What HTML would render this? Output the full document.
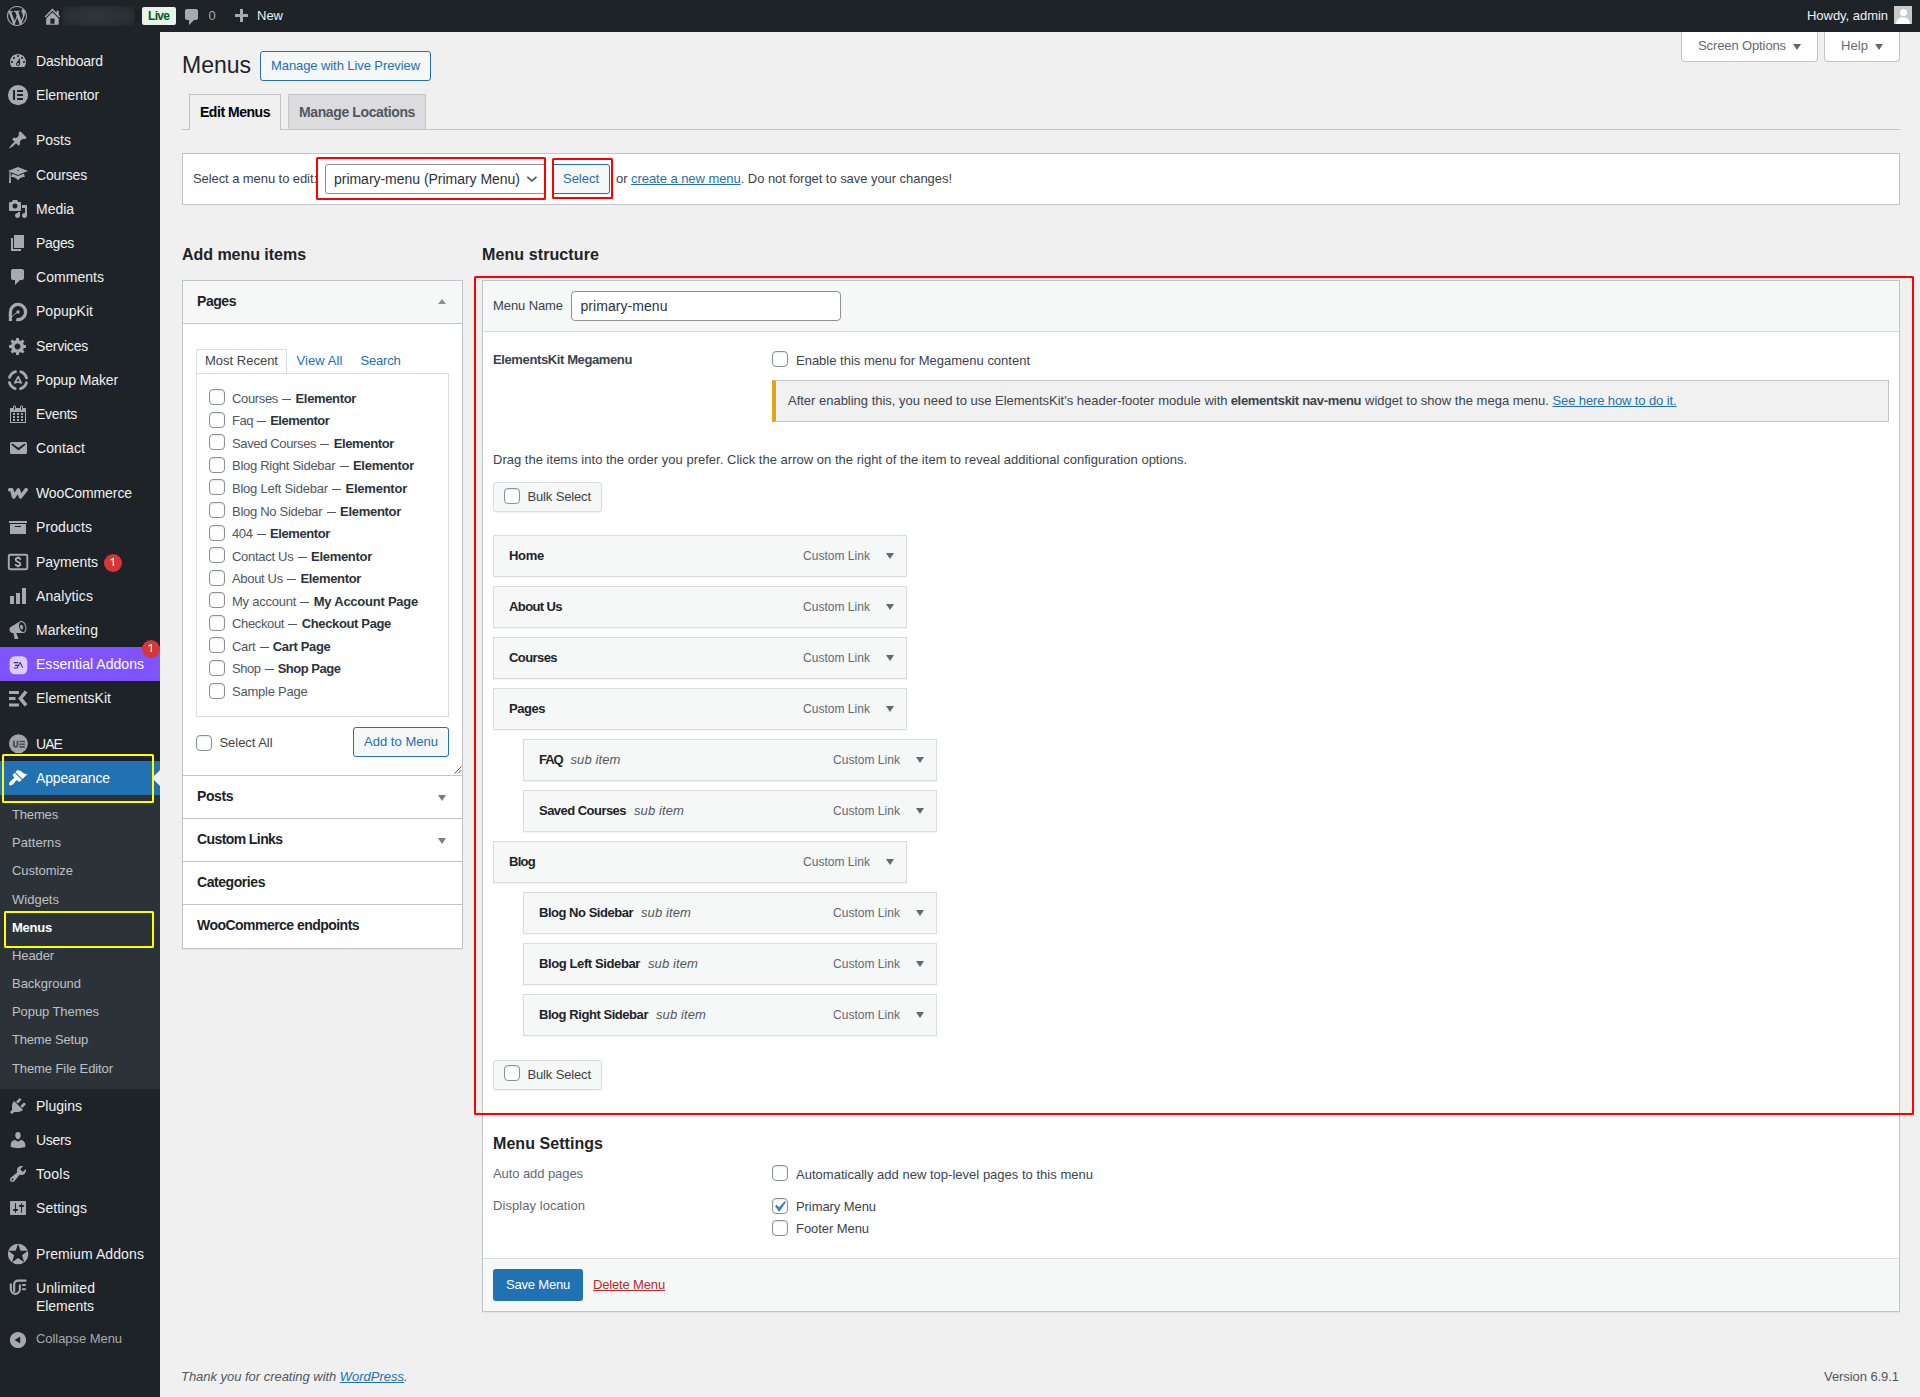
<!DOCTYPE html>
<html lang="en">
<head>
<meta charset="utf-8">
<title>Menus</title>
<style>
*{box-sizing:border-box;margin:0;padding:0}
html,body{width:1920px;height:1397px;overflow:hidden}
body{font-family:"Liberation Sans",sans-serif;font-size:13px;line-height:20px;color:#3c434a;background:#f0f0f1;position:relative}
.abs{position:absolute}
.tx{position:absolute;white-space:nowrap}
.box{position:absolute;background:#fff;border:1px solid #c3c4c7}
.cb{position:absolute;width:16px;height:16px;border:1px solid #8c8f94;border-radius:4px;background:#fff;box-shadow:inset 0 1px 2px rgba(0,0,0,.1)}
.btn2{position:absolute;border:1px solid #2271b1;border-radius:3px;background:#f6f7f7}
.item{position:absolute;height:42px;width:414px;background:#f6f7f7;border:1px solid #dcdcde;box-shadow:0 1px 1px rgba(0,0,0,.04)}
.red{position:absolute;border:2px solid #f00;border-radius:1.5px}
.yel{position:absolute;border:2px solid #ff0;border-radius:1.5px}
a{color:#2271b1}
.dash{display:inline-block;width:9px;height:1px;background:#50575e;vertical-align:3px;margin:0 1px}

</style>
</head>
<body>
<div class="abs" style="left:0;top:0;width:1920px;height:32px;background:#1d2327"></div>
<svg class="abs" style="left:7px;top:6px;" width="20" height="20" viewBox="0 0 20 20"><path fill="#a7aaad" d="M20 10c0-5.51-4.49-10-10-10C4.48 0 0 4.49 0 10c0 5.52 4.48 10 10 10 5.51 0 10-4.48 10-10zM7.78 15.37L4.37 6.22c.55-.02 1.17-.08 1.17-.08.5-.06.44-1.13-.06-1.11 0 0-1.45.11-2.37.11-.18 0-.37 0-.58-.01C4.12 2.69 6.87 1.11 10 1.11c2.33 0 4.45.87 6.05 2.34-.68-.11-1.65.39-1.65 1.58 0 .74.45 1.36.9 2.1.35.61.55 1.36.55 2.46 0 1.49-1.4 5-1.4 5l-3.03-8.37c.54-.02.82-.17.82-.17.5-.05.44-1.25-.06-1.22 0 0-1.44.12-2.38.12-.87 0-2.33-.12-2.33-.12-.5-.03-.56 1.2-.06 1.22l.92.08 1.26 3.41zM17.41 10c.24-.64.74-1.87.43-4.25.7 1.29 1.05 2.71 1.05 4.25 0 3.29-1.73 6.24-4.4 7.78.97-2.59 1.94-5.2 2.92-7.78zM6.1 18.09C3.12 16.65 1.11 13.53 1.11 10c0-1.3.23-2.48.72-3.59C3.25 10.3 4.67 14.2 6.1 18.09zm4.03-6.63l2.58 6.98c-.86.29-1.76.45-2.71.45-.79 0-1.57-.11-2.29-.33.81-2.38 1.62-4.74 2.42-7.1z"/></svg>
<svg class="abs" style="left:41.5px;top:5.7px;" width="20.9" height="20.9" viewBox="0 0 20 20"><path fill="#a7aaad" d="M16 8.5l1.53 1.53-1.06 1.06L10 4.62l-6.47 6.47-1.06-1.06L10 2.5l4 4v-2h2v4zm-6-2.46l6 5.99V18H4v-5.97zM12 17v-5H8v5h4z"/></svg>
<div class="abs" style="left:63px;top:6px;width:71px;height:20px;background:radial-gradient(ellipse at center,#30353a 0%,#2b3035 55%,#23282c 100%)"></div>
<div class="abs" style="left:142px;top:7px;width:34px;height:18px;background:#e9f4eb;border-radius:2px"></div>
<div class="tx " id="t1" style="top:6.34px;font-size:12px;line-height:20px;color:#005c12;left:148px;font-weight:700;letter-spacing:-0.679px;">Live</div>
<svg class="abs" style="left:182px;top:7px;" width="20" height="20" viewBox="0 0 20 20"><path fill="#a7aaad" d="M5 2h9c1.1 0 2 .9 2 2v7c0 1.1-.9 2-2 2h-2l-5 5v-5H5c-1.1 0-2-.9-2-2V4c0-1.1.9-2 2-2z"/></svg>
<div class="tx " id="t2" style="top:6.00px;font-size:13px;line-height:20px;color:#a7aaad;left:208.5px;">0</div>
<svg class="abs" style="left:230.7px;top:7.4px;" width="20" height="20" viewBox="0 0 20 20"><path fill="#a7aaad" d="M17 7v3h-5v5H9v-5H4V7h5V2h3v5h5z"/></svg>
<div class="tx " id="t3" style="top:6.00px;font-size:13px;line-height:20px;color:#f0f0f1;left:257px;letter-spacing:-0.005px;">New</div>
<div class="tx " id="t4" style="top:6.00px;font-size:13px;line-height:20px;color:#f0f0f1;right:32px;letter-spacing:-0.034px;">Howdy, admin</div>
<div class="abs" style="left:1894px;top:6px;width:18px;height:18px;background:#c8c8c8;overflow:hidden"><div class="abs" style="left:5.5px;top:3px;width:7px;height:7px;border-radius:50%;background:#fff"></div><div class="abs" style="left:2px;top:10.5px;width:14px;height:12px;border-radius:7px 7px 0 0;background:#fff"></div></div>
<div class="abs" style="left:0;top:32px;width:160px;height:1365px;background:#1d2327"></div>
<div class="abs" style="left:0;top:647px;width:160px;height:34px;background:#7f54ff"></div>
<div class="abs" style="left:0;top:761px;width:160px;height:34px;background:#2271b1"></div>
<div class="abs" style="left:0;top:795px;width:160px;height:294px;background:#2c3338"></div>
<div class="abs" style="left:144px;top:770px;width:0;height:0;border:8px solid transparent;border-right-color:#f0f0f1"></div>
<svg class="abs" style="left:8px;top:51px;" width="20" height="20" viewBox="0 0 20 20"><path fill="#a7aaad" d="M3.76 16h12.48c1.1-1.37 1.76-3.11 1.76-5 0-4.42-3.58-8-8-8s-8 3.58-8 8c0 1.89.66 3.63 1.76 5zM10 4c.55 0 1 .45 1 1s-.45 1-1 1-1-.45-1-1 .45-1 1-1zM6 6c.55 0 1 .45 1 1s-.45 1-1 1-1-.45-1-1 .45-1 1-1zm8 0c.55 0 1 .45 1 1s-.45 1-1 1-1-.45-1-1 .45-1 1-1zm-5.37 5.55L12 7v6c0 1.1-.9 2-2 2s-2-.9-2-2c0-.57.24-1.08.63-1.45zM4 10c.55 0 1 .45 1 1s-.45 1-1 1-1-.45-1-1 .45-1 1-1zm12 0c.55 0 1 .45 1 1s-.45 1-1 1-1-.45-1-1 .45-1 1-1zm-5 3c0-.55-.45-1-1-1s-1 .45-1 1 .45 1 1 1 1-.45 1-1z"/></svg>
<div class="tx " id="t5" style="top:51.00px;font-size:14px;line-height:20px;color:#f0f0f1;left:36px;letter-spacing:-0.167px;">Dashboard</div>
<svg class="abs" style="left:8px;top:85px;overflow:visible" width="20" height="20" viewBox="0 0 20 20"><circle cx="10.05" cy="10.1" r="10.1" fill="#a7aaad"/><path fill="#1d2327" d="M5.05 5.1h1.95v9.8H5.05zM9.15 5.1h5.85v1.95H9.15zM9.15 9.03h5.85v1.95H9.15zM9.15 12.95h5.85v1.95H9.15z"/></svg>
<div class="tx " id="t6" style="top:85.20px;font-size:14px;line-height:20px;color:#f0f0f1;left:36px;letter-spacing:-0.090px;">Elementor</div>
<svg class="abs" style="left:8px;top:130px;" width="20" height="20" viewBox="0 0 20 20"><path fill="#a7aaad" d="M10.44 3.02l1.82-1.82 6.36 6.35-1.83 1.82c-1.05-.68-2.48-.57-3.41.36l-.75.75c-.92.93-1.04 2.35-.35 3.41l-1.83 1.82-2.41-2.41-2.8 2.79c-.42.42-3.38 2.71-3.8 2.29s1.86-3.39 2.28-3.81l2.79-2.79L4.1 9.36l1.83-1.82c1.05.69 2.48.57 3.4-.36l.75-.75c.93-.92 1.05-2.35.36-3.41z"/></svg>
<div class="tx " id="t7" style="top:130.40px;font-size:14px;line-height:20px;color:#f0f0f1;left:36px;letter-spacing:-0.003px;">Posts</div>
<svg class="abs" style="left:8px;top:165px;" width="20" height="20" viewBox="0 0 20 20"><path fill="#a7aaad" d="M10 10L2.54 7.02 3 18H1l.48-11.41L0 6l10-4 10 4zm0-5c-.55 0-1 .22-1 .5s.45.5 1 .5 1-.22 1-.5-.45-.5-1-.5zm0 6l5.57-2.23c.71.94 1.2 2.07 1.36 3.3-.3-.04-.61-.07-.93-.07-2.55 0-4.78 1.37-6 3.41C8.78 13.37 6.55 12 4 12c-.32 0-.63.03-.93.07.16-1.23.65-2.36 1.36-3.3z"/></svg>
<div class="tx " id="t8" style="top:164.60px;font-size:14px;line-height:20px;color:#f0f0f1;left:36px;letter-spacing:-0.163px;">Courses</div>
<svg class="abs" style="left:8px;top:199px;" width="20" height="20" viewBox="0 0 20 20"><path fill="#a7aaad" d="M13 11V4c0-.55-.45-1-1-1h-1.67L9 1H5L3.67 3H2c-.55 0-1 .45-1 1v7c0 .55.45 1 1 1h10c.55 0 1-.45 1-1zM7 4.5c1.38 0 2.5 1.12 2.5 2.5S8.38 9.5 7 9.5 4.5 8.38 4.5 7 5.62 4.5 7 4.5zM14 6h5v10.5c0 1.38-1.12 2.5-2.5 2.5S14 17.88 14 16.5s1.12-2.5 2.5-2.5c.17 0 .34.02.5.05V9h-3V6zm-4 8.05V13h2v3.5c0 1.38-1.12 2.5-2.5 2.5S7 17.88 7 16.5 8.12 14 9.5 14c.17 0 .34.02.5.05z"/></svg>
<div class="tx " id="t9" style="top:198.80px;font-size:14px;line-height:20px;color:#f0f0f1;left:36px;letter-spacing:-0.028px;">Media</div>
<svg class="abs" style="left:8px;top:233px;" width="20" height="20" viewBox="0 0 20 20"><path fill="#a7aaad" d="M6 15V2h10v13H6zm-1 1h8v2H3V5h2v11z"/></svg>
<div class="tx " id="t10" style="top:233.00px;font-size:14px;line-height:20px;color:#f0f0f1;left:36px;letter-spacing:-0.341px;">Pages</div>
<svg class="abs" style="left:8px;top:267px;" width="20" height="20" viewBox="0 0 20 20"><path fill="#a7aaad" d="M5 2h9c1.1 0 2 .9 2 2v7c0 1.1-.9 2-2 2h-2l-5 5v-5H5c-1.1 0-2-.9-2-2V4c0-1.1.9-2 2-2z"/></svg>
<div class="tx " id="t11" style="top:267.20px;font-size:14px;line-height:20px;color:#f0f0f1;left:36px;letter-spacing:0.039px;">Comments</div>
<svg class="abs" style="left:8px;top:301px;overflow:visible" width="20" height="20" viewBox="0 0 20 20"><path fill="none" stroke="#a7aaad" stroke-width="3.2" d="M2.4 20.1V11.05A7.6 7.6 0 1 1 8.3 18.45"/><path fill="none" stroke="#a7aaad" stroke-width=".9" d="M9.6 11.4Q6 12.6 4.2 15.8"/><circle cx="10" cy="11.05" r="1.7" fill="#a7aaad"/></svg>
<div class="tx " id="t12" style="top:301.40px;font-size:14px;line-height:20px;color:#f0f0f1;left:36px;letter-spacing:0.021px;">PopupKit</div>
<svg class="abs" style="left:8px;top:336px;" width="20" height="20" viewBox="0 0 20 20"><path fill="#a7aaad" d="M18 12h-2.18c-.17.7-.44 1.35-.81 1.93l1.54 1.54-2.1 2.1-1.54-1.54c-.58.36-1.23.63-1.91.79V19H8v-2.18c-.68-.16-1.33-.43-1.91-.79l-1.54 1.54-2.12-2.12 1.54-1.54c-.36-.58-.63-1.23-.79-1.91H1V9.03h2.17c.16-.7.44-1.35.8-1.94L2.43 5.55l2.1-2.1 1.54 1.54c.58-.37 1.24-.64 1.93-.81V2h3v2.18c.68.16 1.33.43 1.91.79l1.54-1.54 2.12 2.12-1.54 1.54c.36.59.64 1.24.8 1.94H18V12zm-8.5 1.5c1.66 0 3-1.34 3-3s-1.34-3-3-3-3 1.34-3 3 1.34 3 3 3z"/></svg>
<div class="tx " id="t13" style="top:335.60px;font-size:14px;line-height:20px;color:#f0f0f1;left:36px;letter-spacing:-0.211px;">Services</div>
<svg class="abs" style="left:8px;top:370px;overflow:visible" width="20" height="20" viewBox="0 0 20 20"><circle cx="9.95" cy="10.15" r="8.85" fill="none" stroke="#a7aaad" stroke-width="2.9" stroke-linecap="round" stroke-dasharray="8.4 5.500" stroke-dashoffset="-2.75"/><path fill="none" stroke="#a7aaad" stroke-width="1.7" stroke-linejoin="round" d="M10.2 6.600L13.200 12.900 10 12 6.700 12.900z"/></svg>
<div class="tx " id="t14" style="top:369.80px;font-size:14px;line-height:20px;color:#f0f0f1;left:36px;letter-spacing:-0.116px;">Popup Maker</div>
<svg class="abs" style="left:8px;top:404px;" width="20" height="20" viewBox="0 0 20 20"><path fill="#a7aaad" d="M15 4h3v15H2V4h3V3c0-.41.15-.76.44-1.06.29-.29.65-.44 1.06-.44s.77.15 1.06.44c.29.3.44.65.44 1.06v1h4V3c0-.41.15-.76.44-1.06.29-.29.65-.44 1.06-.44s.77.15 1.06.44c.29.3.44.65.44 1.06v1zM6 3v2.5c0 .14.05.26.15.36.09.09.21.14.35.14s.26-.05.35-.14c.1-.1.15-.22.15-.36V3c0-.14-.05-.26-.15-.35-.09-.1-.21-.15-.35-.15s-.26.05-.35.15c-.1.09-.15.21-.15.35zm7 0v2.5c0 .14.05.26.14.36.1.09.22.14.36.14s.26-.05.36-.14c.09-.1.14-.22.14-.36V3c0-.14-.05-.26-.14-.35-.1-.1-.22-.15-.36-.15s-.26.05-.36.15c-.09.09-.14.21-.14.35zm4 15V8H3v10h14zM7 9v2H5V9h2zm2 0h2v2H9V9zm4 2V9h2v2h-2zm-6 1v2H5v-2h2zm2 0h2v2H9v-2zm4 2v-2h2v2h-2zm-6 1v2H5v-2h2zm4 2H9v-2h2v2zm4 0h-2v-2h2v2z"/></svg>
<div class="tx " id="t15" style="top:404.00px;font-size:14px;line-height:20px;color:#f0f0f1;left:36px;letter-spacing:-0.302px;">Events</div>
<svg class="abs" style="left:8px;top:438px;" width="20" height="20" viewBox="0 0 20 20"><path fill="#a7aaad" d="M3.87 4h13.25C18.37 4 19 4.59 19 5.79v8.42c0 1.19-.63 1.79-1.88 1.79H3.87c-1.25 0-1.88-.6-1.88-1.79V5.79c0-1.2.63-1.79 1.88-1.79zm6.62 8.6l6.74-5.53c.24-.2.43-.66.13-1.07-.29-.41-.82-.42-1.17-.17l-5.7 3.86L4.8 5.83c-.35-.25-.88-.24-1.17.17-.3.41-.11.87.13 1.07z"/></svg>
<div class="tx " id="t16" style="top:438.20px;font-size:14px;line-height:20px;color:#f0f0f1;left:36px;letter-spacing:0.107px;">Contact</div>
<svg class="abs" style="left:8px;top:483px;overflow:visible" width="20" height="20" viewBox="0 0 20 20"><path fill="none" stroke="#a7aaad" stroke-width="3.6" stroke-linecap="round" stroke-linejoin="round" d="M1.7 6.800H3.700L5.700 14 10.400 6.900 12.500 14 18.200 6.600"/></svg>
<div class="tx " id="t17" style="top:483.40px;font-size:14px;line-height:20px;color:#f0f0f1;left:36px;letter-spacing:-0.091px;">WooCommerce</div>
<svg class="abs" style="left:8px;top:517px;" width="20" height="20" viewBox="0 0 20 20"><path fill="#a7aaad" d="M19 4v2H1V4h18zM2 7h16v10H2V7zm11 3V9H7v1h6z"/></svg>
<div class="tx " id="t18" style="top:516.90px;font-size:14px;line-height:20px;color:#f0f0f1;left:36px;letter-spacing:0.094px;">Products</div>
<svg class="abs" style="left:8px;top:552px;overflow:visible" width="20" height="20" viewBox="0 0 20 20"><rect x=".8" y="2.8" width="18.5" height="14.5" rx="1.2" fill="none" stroke="#a7aaad" stroke-width="1.9"/><path fill="none" stroke="#b4b7ba" stroke-width="1.75" d="M12.35 7.800C12.350 6.500 11.350 5.950 10 5.950C8.600 5.950 7.650 6.650 7.650 7.750C7.650 9.050 8.800 9.450 10 9.850C11.300 10.250 12.400 10.750 12.400 12.100C12.400 13.300 11.400 13.950 10 13.950C8.500 13.950 7.600 13.250 7.600 11.950M10 4.600V6.200M10 13.700V15.300"/></svg>
<div class="tx " id="t19" style="top:551.80px;font-size:14px;line-height:20px;color:#f0f0f1;left:36px;letter-spacing:-0.031px;">Payments</div>
<svg class="abs" style="left:8px;top:586px;" width="20" height="20" viewBox="0 0 20 20"><path fill="#a7aaad" d="M18 18V2h-4v16h4zm-6 0V7H8v11h4zm-6 0v-8H2v8h4z"/></svg>
<div class="tx " id="t20" style="top:585.70px;font-size:14px;line-height:20px;color:#f0f0f1;left:36px;letter-spacing:0.108px;">Analytics</div>
<svg class="abs" style="left:8px;top:620px;" width="20" height="20" viewBox="0 0 20 20"><path fill="#a7aaad" d="M18.15 5.94c.46 1.62.38 3.22-.02 4.48-.42 1.28-1.26 2.18-2.3 2.48-.16.06-.26.06-.4.06-.06.02-.12.02-.18.02-.06.02-.14.02-.22.02h-6.8l2.22 5.5c.02.14-.06.26-.14.34-.08.1-.24.16-.34.16H6.95c-.1 0-.26-.06-.34-.16-.08-.08-.16-.2-.14-.34l-1-5.5H4.25l-.02-.02c-.5.06-1.08-.18-1.54-.62s-.88-1.08-1.06-1.88c-.24-.8-.2-1.56-.02-2.2.18-.62.58-1.08 1.06-1.3l.02-.02 9-5.4c.1-.06.18-.1.24-.16.06-.04.14-.08.24-.12.16-.08.28-.12.5-.18 1.04-.3 2.24.1 3.22.98s1.84 2.24 2.26 3.86zm-2.58 5.98h-.02c.4-.1.74-.34 1.04-.7.58-.7.86-1.76.86-3.04 0-.64-.1-1.3-.28-1.98-.34-1.36-1.02-2.5-1.78-3.24s-1.68-1.1-2.46-.88c-.82.22-1.4.96-1.7 2-.32 1.04-.28 2.36.06 3.72.38 1.36 1 2.5 1.8 3.24.78.74 1.62 1.1 2.48.88zm-2.54-7.08c.22-.04.42-.02.62.04.38.16.76.48 1.02 1s.42 1.2.42 1.78c0 .3-.04.56-.12.8-.18.48-.44.84-.86.94-.34.1-.8-.06-1.14-.4s-.64-.86-.78-1.5c-.18-.62-.12-1.24.02-1.72s.48-.84.82-.94z"/></svg>
<div class="tx " id="t21" style="top:620.20px;font-size:14px;line-height:20px;color:#f0f0f1;left:36px;letter-spacing:0.059px;">Marketing</div>
<svg class="abs" style="left:8px;top:654px;overflow:visible" width="20" height="20" viewBox="0 0 20 20"><rect x="1.6" y="2.2" width="17.7" height="18" rx="5.2" fill="#dccdfe"/><path fill="none" stroke="#3d2a8a" stroke-width="1.05" d="M5.7 8.6h4.8M7 11.35h3M5.7 14h3.5L12.2 8.6 14.7 13.8"/></svg>
<div class="tx " id="t22" style="top:654.40px;font-size:14px;line-height:20px;color:#fff;left:36px;letter-spacing:0.037px;">Essential Addons</div>
<svg class="abs" style="left:8px;top:689px;overflow:visible" width="20" height="20" viewBox="0 0 20 20"><path fill="#a7aaad" d="M1 1.9h9.9v3H1zM1 7.9h6.45v3H1zM1 14.4h9.9v3H1z"/><path fill="none" stroke="#a7aaad" stroke-width="3.5" d="M18.100 2.500L12.400 9.400 18.100 16.400"/></svg>
<div class="tx " id="t23" style="top:687.80px;font-size:14px;line-height:20px;color:#f0f0f1;left:36px;letter-spacing:0.027px;">ElementsKit</div>
<svg class="abs" style="left:8px;top:734px;overflow:visible" width="20" height="20" viewBox="0 0 20 20"><circle cx="10.45" cy="9.75" r="9.45" fill="#a0a4a8"/><path fill="none" stroke="#4a4f55" stroke-width="1.9" d="M5.85 6.7v4.2a1.8 1.8 0 0 0 3.6 0V6.7"/><path fill="#4a4f55" d="M11.3 6.7h5.600v1.650h-5.600zM11.3 9.400h5.600v1.650h-5.600zM11.3 12.05h5.600v1.650h-5.600z"/></svg>
<div class="tx " id="t24" style="top:733.80px;font-size:14px;line-height:20px;color:#f0f0f1;left:36px;letter-spacing:-0.932px;">UAE</div>
<svg class="abs" style="left:8px;top:768px;" width="20" height="20" viewBox="0 0 20 20"><path fill="#fff" d="M14.48 11.06L7.41 3.99l1.5-1.5c.5-.56 2.3-.47 3.51.32 1.21.8 1.43 1.28 2.91 2.1 1.18.64 2.45 1.26 4.45.85zm-.71.71L6.7 4.7 4.93 6.47c-.39.39-.39 1.02 0 1.41l1.06 1.06c.39.39.39 1.03 0 1.42-.6.6-1.43 1.11-2.21 1.69-.35.26-.7.53-1.01.84C1.43 14.23.4 16.08 1.4 17.07c.99 1 2.84-.03 4.18-1.36.31-.31.58-.66.85-1.02.57-.78 1.08-1.61 1.69-2.21.39-.39 1.02-.39 1.41 0l1.06 1.06c.39.39 1.02.39 1.41 0z"/></svg>
<div class="tx " id="t25" style="top:768.00px;font-size:14px;line-height:20px;color:#fff;left:36px;letter-spacing:-0.152px;">Appearance</div>
<div class="abs" style="left:104px;top:554px;width:18px;height:18px;border-radius:9px;background:#d63638"><svg class="abs" style="left:0;top:0" width="18" height="18" viewBox="0 0 18 18"><path fill="#fff" d="M10 4V12H8.700V5.650L6.300 6.600V5.450L9.100 4z"/></svg></div>
<div class="abs" style="left:142px;top:640px;width:18px;height:18px;border-radius:9px;background:#d63638"><svg class="abs" style="left:0;top:0" width="18" height="18" viewBox="0 0 18 18"><path fill="#fff" d="M10 4V12H8.700V5.650L6.300 6.600V5.450L9.100 4z"/></svg></div>
<div class="tx " id="t26" style="top:804.50px;font-size:13px;line-height:20px;color:#bdc1c5;left:12px;letter-spacing:-0.161px;">Themes</div>
<div class="tx " id="t27" style="top:832.50px;font-size:13px;line-height:20px;color:#bdc1c5;left:12px;letter-spacing:0.072px;">Patterns</div>
<div class="tx " id="t28" style="top:860.50px;font-size:13px;line-height:20px;color:#bdc1c5;left:12px;letter-spacing:-0.047px;">Customize</div>
<div class="tx " id="t29" style="top:889.95px;font-size:13px;line-height:20px;color:#bdc1c5;left:12px;letter-spacing:0.004px;">Widgets</div>
<div class="tx " id="t30" style="top:918.10px;font-size:13px;line-height:20px;color:#fff;left:12px;font-weight:700;letter-spacing:-0.234px;">Menus</div>
<div class="tx " id="t31" style="top:946.25px;font-size:13px;line-height:20px;color:#bdc1c5;left:12px;letter-spacing:-0.107px;">Header</div>
<div class="tx " id="t32" style="top:974.40px;font-size:13px;line-height:20px;color:#bdc1c5;left:12px;letter-spacing:-0.039px;">Background</div>
<div class="tx " id="t33" style="top:1001.55px;font-size:13px;line-height:20px;color:#bdc1c5;left:12px;letter-spacing:-0.078px;">Popup Themes</div>
<div class="tx " id="t34" style="top:1029.70px;font-size:13px;line-height:20px;color:#bdc1c5;left:12px;letter-spacing:-0.186px;">Theme Setup</div>
<div class="tx " id="t35" style="top:1058.85px;font-size:13px;line-height:20px;color:#bdc1c5;left:12px;letter-spacing:-0.094px;">Theme File Editor</div>
<div class="yel" style="left:2px;top:754px;width:152px;height:49px"></div>
<div class="yel" style="left:4px;top:911px;width:150px;height:37px"></div>
<svg class="abs" style="left:8px;top:1096px;" width="20" height="20" viewBox="0 0 20 20"><path fill="#a7aaad" d="M13.11 4.36L9.87 7.6 8 5.73l3.24-3.24c.35-.34 1.05-.2 1.56.32.52.51.66 1.21.31 1.55zm-8 1.77l.91-1.12 9.01 9.01-1.19.84c-.71.71-2.63 1.16-3.82 1.16H6.14L4.9 17.26c-.59.59-1.54.59-2.12 0-.59-.58-.59-1.53 0-2.12l1.24-1.24v-3.88c0-1.13.4-3.19 1.09-3.89zm7.26 3.97l3.24-3.24c.34-.35 1.04-.21 1.55.31.52.51.66 1.21.31 1.55l-3.24 3.25z"/></svg>
<div class="tx " id="t36" style="top:1095.80px;font-size:14px;line-height:20px;color:#f0f0f1;left:36px;letter-spacing:0.011px;">Plugins</div>
<svg class="abs" style="left:8px;top:1130px;" width="20" height="20" viewBox="0 0 20 20"><path fill="#a7aaad" d="M10 9.25c-2.27 0-2.73-3.44-2.73-3.44C7 4.02 7.82 2 9.97 2c2.16 0 2.98 2.02 2.71 3.81 0 0-.41 3.44-2.68 3.44zm0 2.57L12.72 10c2.39 0 4.52 2.33 4.52 4.53v2.49s-3.65 1.13-7.24 1.13c-3.65 0-7.24-1.13-7.24-1.13v-2.49c0-2.25 1.94-4.48 4.47-4.48z"/></svg>
<div class="tx " id="t37" style="top:1130.00px;font-size:14px;line-height:20px;color:#f0f0f1;left:36px;letter-spacing:-0.312px;">Users</div>
<svg class="abs" style="left:8px;top:1164px;" width="20" height="20" viewBox="0 0 20 20"><path fill="#a7aaad" d="M16.68 9.77c-1.34 1.34-3.3 1.67-4.95.99l-5.41 6.52c-.99.99-2.59.99-3.58 0s-.99-2.59 0-3.57l6.52-5.42c-.68-1.65-.35-3.61.99-4.95 1.28-1.28 3.12-1.62 4.72-1.06l-2.89 2.89 2.82 2.82 2.86-2.87c.53 1.58.18 3.39-1.08 4.65zM3.81 16.21c.4.39 1.04.39 1.43 0 .4-.4.4-1.04 0-1.43-.39-.4-1.03-.4-1.43 0-.39.39-.39 1.03 0 1.43z"/></svg>
<div class="tx " id="t38" style="top:1164.20px;font-size:14px;line-height:20px;color:#f0f0f1;left:36px;letter-spacing:0.263px;">Tools</div>
<svg class="abs" style="left:8px;top:1198px;" width="20" height="20" viewBox="0 0 20 20"><path fill="#a7aaad" d="M18 16V4c0-.55-.45-1-1-1H3c-.55 0-1 .45-1 1v12c0 .55.45 1 1 1h14c.55 0 1-.45 1-1zM8 11h1c.55 0 1 .45 1 1s-.45 1-1 1H8v1.5c0 .28-.22.5-.5.5s-.5-.22-.5-.5V13H6c-.55 0-1-.45-1-1s.45-1 1-1h1V5.5c0-.28.22-.5.5-.5s.5.22.5.5V11zm5-2h-1c-.55 0-1-.45-1-1s.45-1 1-1h1V5.5c0-.28.22-.5.5-.5s.5.22.5.5V7h1c.55 0 1 .45 1 1s-.45 1-1 1h-1v5.5c0 .28-.22.5-.5.5s-.5-.22-.5-.5V9z"/></svg>
<div class="tx " id="t39" style="top:1198.40px;font-size:14px;line-height:20px;color:#f0f0f1;left:36px;letter-spacing:0.051px;">Settings</div>
<svg class="abs" style="left:8px;top:1244px;overflow:visible" width="20" height="20" viewBox="0 0 20 20"><circle cx="10.1" cy="10" r="10.3" fill="#a7aaad"/><path fill="#1d2327" d="M10.10 -0.30L12.51 6.68L19.90 6.82L14.00 11.27L16.15 18.33L10.10 14.10L4.05 18.33L6.20 11.27L0.30 6.82L7.69 6.68z"/></svg>
<div class="tx " id="t40" style="top:1243.60px;font-size:14px;line-height:20px;color:#f0f0f1;left:36px;letter-spacing:0.099px;">Premium Addons</div>
<svg class="abs" style="left:8px;top:1278px;overflow:visible" width="20" height="20" viewBox="0 0 20 20"><g fill="none" stroke="#a7aaad" stroke-width="2.15" stroke-linecap="round"><path d="M2.8 6.2V11.3a4.550 4.550 0 0 0 9.100 0V7.2"/><path d="M6.150 13.2V6.400a3.750 3.750 0 0 1 3.750-3.750H17.600"/><path d="M15 6.950h2M15 11.200h2"/></g></svg>
<div class="tx " id="t41" style="top:1277.75px;font-size:14px;line-height:20px;color:#f0f0f1;left:36px;letter-spacing:0.071px;">Unlimited</div>
<div class="tx " id="t42" style="top:1295.95px;font-size:14px;line-height:20px;color:#f0f0f1;left:36px;letter-spacing:-0.045px;">Elements</div>
<svg class="abs" style="left:8px;top:1330px;" width="20" height="20" viewBox="0 0 20 20"><path fill="#a7aaad" d="M10 1.900c-4.480 0-8.100 3.620-8.100 8.100s3.620 8.100 8.100 8.100 8.100-3.620 8.100-8.100-3.620-8.100-8.100-8.100zM12.200 13.500L6.600 10l5.600-3.500v7z"/></svg>
<div class="tx " id="t43" style="top:1328.60px;font-size:13px;line-height:20px;color:#a7aaad;left:36px;letter-spacing:-0.055px;">Collapse Menu</div>
<div class="abs" style="left:1681px;top:32px;width:137px;height:29.5px;background:#fff;border:1px solid #c3c4c7;border-top:none;border-radius:0 0 4px 4px"></div>
<div class="tx " id="t44" style="top:35.50px;font-size:13px;line-height:20px;color:#646970;left:1698px;letter-spacing:-0.115px;">Screen Options</div>
<div class="abs" style="left:1793.3px;top:44.2px;width:0;height:0;border-left:4.2px solid transparent;border-right:4.2px solid transparent;border-top:6px solid #646970"></div>
<div class="abs" style="left:1824px;top:32px;width:76px;height:29.5px;background:#fff;border:1px solid #c3c4c7;border-top:none;border-radius:0 0 4px 4px"></div>
<div class="tx " id="t45" style="top:35.50px;font-size:13px;line-height:20px;color:#646970;left:1841px;letter-spacing:0.062px;">Help</div>
<div class="abs" style="left:1875.1px;top:44.2px;width:0;height:0;border-left:4.2px solid transparent;border-right:4.2px solid transparent;border-top:6px solid #646970"></div>
<div class="tx " id="t46" style="top:55.03px;font-size:23px;line-height:20px;color:#1d2327;left:182px;letter-spacing:-0.009px;">Menus</div>
<div class="btn2" style="left:260px;top:51px;width:171px;height:30px"></div>
<div class="tx " id="t47" style="top:55.50px;font-size:13px;line-height:20px;color:#2271b1;left:271px;letter-spacing:-0.085px;">Manage with Live Preview</div>
<div class="abs" style="left:182px;top:129px;width:1718px;height:1px;background:#c3c4c7"></div>
<div class="abs" style="left:189px;top:94px;width:92px;height:36px;background:#f0f0f1;border:1px solid #c3c4c7;border-bottom:none"></div>
<div class="tx " id="t48" style="top:102.15px;font-size:14px;line-height:20px;color:#000;left:200px;font-weight:700;letter-spacing:-0.467px;">Edit Menus</div>
<div class="abs" style="left:288px;top:94px;width:138px;height:35px;background:#dcdcde;border:1px solid #c3c4c7;border-bottom:none"></div>
<div class="tx " id="t49" style="top:102.15px;font-size:14px;line-height:20px;color:#50575e;left:299px;font-weight:700;letter-spacing:-0.384px;">Manage Locations</div>
<div class="box" style="left:182px;top:153px;width:1718px;height:52px;"></div>
<div class="tx " id="t50" style="top:168.50px;font-size:13px;line-height:20px;color:#3c434a;left:193px;letter-spacing:-0.080px;">Select a menu to edit:</div>
<div class="abs" style="left:325px;top:164px;width:221px;height:30px;background:#fff;border:1px solid #8c8f94;border-radius:3px"></div>
<div class="tx " id="t51" style="top:169.15px;font-size:14px;line-height:20px;color:#2c3338;left:334px;letter-spacing:-0.026px;">primary-menu (Primary Menu)</div>
<svg class="abs" style="left:525px;top:172px" width="14" height="14" viewBox="0 0 14 14"><path d="M2.300 4.900L6.900 8.900 11.500 4.900" fill="none" stroke="#50575e" stroke-width="1.700"/></svg>
<div class="red" style="left:316px;top:157px;width:230px;height:43px"></div>
<div class="btn2" style="left:552px;top:164px;width:58px;height:30px;border-radius:0 3px 3px 0"></div>
<div class="tx " id="t52" style="top:168.50px;font-size:13px;line-height:20px;color:#2271b1;left:563px;letter-spacing:-0.023px;">Select</div>
<div class="red" style="left:552px;top:158px;width:61px;height:41px"></div>
<div class="tx " id="t53" style="top:168.50px;font-size:13px;line-height:20px;color:#3c434a;left:616px;letter-spacing:-0.052px;">or <u style="color:#2271b1">create a new menu</u>. Do not forget to save your changes!</div>
<div class="tx " id="t54" style="top:245.46px;font-size:16px;line-height:20px;color:#1d2327;left:182px;font-weight:700;letter-spacing:-0.033px;">Add menu items</div>
<div class="box" style="left:182px;top:280px;width:281px;height:669px;box-shadow:0 1px 1px rgba(0,0,0,.04)"></div>
<div class="abs" style="left:183px;top:281px;width:279px;height:43px;background:#f6f7f7;border-bottom:1px solid #c3c4c7"></div>
<div class="tx " id="t55" style="top:290.65px;font-size:14px;line-height:20px;color:#1d2327;left:197px;font-weight:700;letter-spacing:-0.450px;">Pages</div>
<div class="abs" style="left:438px;top:298.5px;width:0;height:0;border-left:4px solid transparent;border-right:4px solid transparent;border-bottom:5.5px solid #8c8f94"></div>
<div class="abs" style="left:196px;top:373px;width:253px;height:344px;background:#fff;border:1px solid #dcdcde"></div>
<div class="abs" style="left:196px;top:349px;width:91px;height:24px;background:#fff;border:1px solid #dcdcde;border-bottom:none"></div>
<div class="tx " id="t56" style="top:350.50px;font-size:13px;line-height:20px;color:#3c434a;left:205px;letter-spacing:0.001px;">Most Recent</div>
<div class="tx " id="t57" style="top:350.50px;font-size:13px;line-height:20px;color:#2271b1;left:296.5px;letter-spacing:0.088px;">View All</div>
<div class="tx " id="t58" style="top:350.50px;font-size:13px;line-height:20px;color:#2271b1;left:360.5px;letter-spacing:-0.201px;">Search</div>
<div class="cb" style="left:209px;top:389px"></div>
<div class="tx " id="t59" style="top:388.70px;font-size:13px;line-height:20px;color:#50575e;left:232px;letter-spacing:-0.346px;">Courses <i class="dash"></i> <b style="color:#2c3338">Elementor</b></div>
<div class="cb" style="left:209px;top:412px"></div>
<div class="tx " id="t60" style="top:411.26px;font-size:13px;line-height:20px;color:#50575e;left:232px;letter-spacing:-0.494px;">Faq <i class="dash"></i> <b style="color:#2c3338">Elementor</b></div>
<div class="cb" style="left:209px;top:434px"></div>
<div class="tx " id="t61" style="top:433.82px;font-size:13px;line-height:20px;color:#50575e;left:232px;letter-spacing:-0.363px;">Saved Courses <i class="dash"></i> <b style="color:#2c3338">Elementor</b></div>
<div class="cb" style="left:209px;top:457px"></div>
<div class="tx " id="t62" style="top:456.38px;font-size:13px;line-height:20px;color:#50575e;left:232px;letter-spacing:-0.283px;">Blog Right Sidebar <i class="dash"></i> <b style="color:#2c3338">Elementor</b></div>
<div class="cb" style="left:209px;top:479px"></div>
<div class="tx " id="t63" style="top:478.94px;font-size:13px;line-height:20px;color:#50575e;left:232px;letter-spacing:-0.234px;">Blog Left Sidebar <i class="dash"></i> <b style="color:#2c3338">Elementor</b></div>
<div class="cb" style="left:209px;top:502px"></div>
<div class="tx " id="t64" style="top:501.50px;font-size:13px;line-height:20px;color:#50575e;left:232px;letter-spacing:-0.288px;">Blog No Sidebar <i class="dash"></i> <b style="color:#2c3338">Elementor</b></div>
<div class="cb" style="left:209px;top:525px"></div>
<div class="tx " id="t65" style="top:524.06px;font-size:13px;line-height:20px;color:#50575e;left:232px;letter-spacing:-0.394px;">404 <i class="dash"></i> <b style="color:#2c3338">Elementor</b></div>
<div class="cb" style="left:209px;top:547px"></div>
<div class="tx " id="t66" style="top:546.62px;font-size:13px;line-height:20px;color:#50575e;left:232px;letter-spacing:-0.292px;">Contact Us <i class="dash"></i> <b style="color:#2c3338">Elementor</b></div>
<div class="cb" style="left:209px;top:570px"></div>
<div class="tx " id="t67" style="top:569.18px;font-size:13px;line-height:20px;color:#50575e;left:232px;letter-spacing:-0.331px;">About Us <i class="dash"></i> <b style="color:#2c3338">Elementor</b></div>
<div class="cb" style="left:209px;top:592px"></div>
<div class="tx " id="t68" style="top:591.74px;font-size:13px;line-height:20px;color:#50575e;left:232px;letter-spacing:-0.244px;">My account <i class="dash"></i> <b style="color:#2c3338">My Account Page</b></div>
<div class="cb" style="left:209px;top:615px"></div>
<div class="tx " id="t69" style="top:614.30px;font-size:13px;line-height:20px;color:#50575e;left:232px;letter-spacing:-0.352px;">Checkout <i class="dash"></i> <b style="color:#2c3338">Checkout Page</b></div>
<div class="cb" style="left:209px;top:637px"></div>
<div class="tx " id="t70" style="top:636.86px;font-size:13px;line-height:20px;color:#50575e;left:232px;letter-spacing:-0.333px;">Cart <i class="dash"></i> <b style="color:#2c3338">Cart Page</b></div>
<div class="cb" style="left:209px;top:660px"></div>
<div class="tx " id="t71" style="top:659.42px;font-size:13px;line-height:20px;color:#50575e;left:232px;letter-spacing:-0.486px;">Shop <i class="dash"></i> <b style="color:#2c3338">Shop Page</b></div>
<div class="cb" style="left:209px;top:683px"></div>
<div class="tx " id="t72" style="top:681.98px;font-size:13px;line-height:20px;color:#50575e;left:232px;letter-spacing:-0.233px;">Sample Page</div>
<div class="cb" style="left:196px;top:735px"></div>
<div class="tx " id="t73" style="top:732.90px;font-size:13px;line-height:20px;color:#3c434a;left:219.5px;letter-spacing:-0.048px;">Select All</div>
<div class="btn2" style="left:353px;top:727px;width:96px;height:30px"></div>
<div class="tx " id="t74" style="top:731.50px;font-size:13px;line-height:20px;color:#2271b1;left:364px;letter-spacing:0.026px;">Add to Menu</div>
<svg class="abs" style="left:454px;top:766px" width="8" height="8" viewBox="0 0 8 8"><path d="M0.500 7.500L7.500 0.500M4 7.500L7.500 4" stroke="#666" stroke-width="1" fill="none"/></svg>
<div class="abs" style="left:183px;top:775px;width:279px;height:1px;background:#c3c4c7"></div>
<div class="tx " id="t75" style="top:785.95px;font-size:14px;line-height:20px;color:#1d2327;left:197px;font-weight:700;letter-spacing:-0.425px;">Posts</div>
<div class="abs" style="left:438px;top:794.5px;width:0;height:0;border-left:4px solid transparent;border-right:4px solid transparent;border-top:6px solid #787c82"></div>
<div class="abs" style="left:183px;top:818px;width:279px;height:1px;background:#c3c4c7"></div>
<div class="tx " id="t76" style="top:828.95px;font-size:14px;line-height:20px;color:#1d2327;left:197px;font-weight:700;letter-spacing:-0.590px;">Custom Links</div>
<div class="abs" style="left:438px;top:837.5px;width:0;height:0;border-left:4px solid transparent;border-right:4px solid transparent;border-top:6px solid #787c82"></div>
<div class="abs" style="left:183px;top:861px;width:279px;height:1px;background:#c3c4c7"></div>
<div class="tx " id="t77" style="top:871.95px;font-size:14px;line-height:20px;color:#1d2327;left:197px;font-weight:700;letter-spacing:-0.436px;">Categories</div>
<div class="abs" style="left:183px;top:904px;width:279px;height:1px;background:#c3c4c7"></div>
<div class="tx " id="t78" style="top:914.95px;font-size:14px;line-height:20px;color:#1d2327;left:197px;font-weight:700;letter-spacing:-0.533px;">WooCommerce endpoints</div>
<div class="tx " id="t79" style="top:245.46px;font-size:16px;line-height:20px;color:#1d2327;left:482px;font-weight:700;letter-spacing:0.102px;">Menu structure</div>
<div class="box" style="left:482px;top:280px;width:1418px;height:1032px;box-shadow:0 1px 1px rgba(0,0,0,.04)"></div>
<div class="abs" style="left:483px;top:281px;width:1416px;height:51px;background:#f6f7f7;border-bottom:1px solid #dcdcde"></div>
<div class="tx " id="t80" style="top:295.50px;font-size:13px;line-height:20px;color:#3c434a;left:493px;letter-spacing:-0.090px;">Menu Name</div>
<div class="abs" style="left:571px;top:291px;width:270px;height:30px;background:#fff;border:1px solid #8c8f94;border-radius:4px"></div>
<div class="tx " id="t81" style="top:296.15px;font-size:14px;line-height:20px;color:#2c3338;left:580.5px;letter-spacing:0.053px;">primary-menu</div>
<div class="tx " id="t82" style="top:349.50px;font-size:13px;line-height:20px;color:#3c434a;left:493px;font-weight:700;letter-spacing:-0.383px;">ElementsKit Megamenu</div>
<div class="cb" style="left:772px;top:351px"></div>
<div class="tx " id="t83" style="top:350.50px;font-size:13px;line-height:20px;color:#3c434a;left:796px;letter-spacing:-0.004px;">Enable this menu for Megamenu content</div>
<div class="abs" style="left:772px;top:380px;width:1117px;height:42px;background:#f1f1f1;border:1px solid #c3c4c7;border-left:4px solid #dba617"></div>
<div class="tx " id="t84" style="top:390.50px;font-size:13px;line-height:20px;color:#3c434a;left:788px;letter-spacing:-0.012px;">After enabling this, you need to use ElementsKit's header-footer module with</div>
<div class="tx " id="t85" style="top:390.50px;font-size:13px;line-height:20px;color:#3c434a;left:1230.7px;font-weight:700;letter-spacing:-0.302px;">elementskit nav-menu</div>
<div class="tx " id="t86" style="top:390.50px;font-size:13px;line-height:20px;color:#3c434a;left:1365px;letter-spacing:0.015px;">widget to show the mega menu.</div>
<div class="tx " id="t87" style="top:390.50px;font-size:13px;line-height:20px;color:#2271b1;left:1552.5px;letter-spacing:-0.113px;"><u>See here how to do it.</u></div>
<div class="tx " id="t88" style="top:449.50px;font-size:13px;line-height:20px;color:#3c434a;left:493px;letter-spacing:0.014px;">Drag the items into the order you prefer. Click the arrow on the right of the item to reveal additional configuration options.</div>
<div class="abs" style="left:493px;top:482px;width:109px;height:29.500px;background:#f6f7f7;border:1px solid #dcdcde;border-radius:3px;box-shadow:0 1px 1px rgba(0,0,0,.06)"></div>
<div class="cb" style="left:504px;top:488px"></div>
<div class="tx " id="t89" style="top:486.90px;font-size:13px;line-height:20px;color:#3c434a;left:527.5px;letter-spacing:-0.150px;">Bulk Select</div>
<div class="item" style="left:493px;top:535px"></div>
<div class="tx " id="t90" style="top:546.00px;font-size:13px;line-height:20px;color:#1d2327;left:509px;font-weight:700;letter-spacing:-0.281px;">Home</div>
<div class="tx " id="t91" style="top:546.34px;font-size:12px;line-height:20px;color:#646970;left:803px;letter-spacing:0.027px;">Custom Link</div>
<div class="abs" style="left:886px;top:553px;width:0;height:0;border-left:4px solid transparent;border-right:4px solid transparent;border-top:6px solid #646970"></div>
<div class="item" style="left:493px;top:586px"></div>
<div class="tx " id="t92" style="top:597.00px;font-size:13px;line-height:20px;color:#1d2327;left:509px;font-weight:700;letter-spacing:-0.598px;">About Us</div>
<div class="tx " id="t93" style="top:597.34px;font-size:12px;line-height:20px;color:#646970;left:803px;letter-spacing:0.027px;">Custom Link</div>
<div class="abs" style="left:886px;top:604px;width:0;height:0;border-left:4px solid transparent;border-right:4px solid transparent;border-top:6px solid #646970"></div>
<div class="item" style="left:493px;top:637px"></div>
<div class="tx " id="t94" style="top:648.00px;font-size:13px;line-height:20px;color:#1d2327;left:509px;font-weight:700;letter-spacing:-0.576px;">Courses</div>
<div class="tx " id="t95" style="top:648.34px;font-size:12px;line-height:20px;color:#646970;left:803px;letter-spacing:0.027px;">Custom Link</div>
<div class="abs" style="left:886px;top:655px;width:0;height:0;border-left:4px solid transparent;border-right:4px solid transparent;border-top:6px solid #646970"></div>
<div class="item" style="left:493px;top:688px"></div>
<div class="tx " id="t96" style="top:699.00px;font-size:13px;line-height:20px;color:#1d2327;left:509px;font-weight:700;letter-spacing:-0.463px;">Pages</div>
<div class="tx " id="t97" style="top:699.34px;font-size:12px;line-height:20px;color:#646970;left:803px;letter-spacing:0.027px;">Custom Link</div>
<div class="abs" style="left:886px;top:706px;width:0;height:0;border-left:4px solid transparent;border-right:4px solid transparent;border-top:6px solid #646970"></div>
<div class="item" style="left:523px;top:739px"></div>
<div class="tx " id="t98" style="top:750.00px;font-size:13px;line-height:20px;color:#1d2327;left:539px;font-weight:700;letter-spacing:-1.078px;">FAQ</div>
<div class="tx " id="t99" style="top:750.00px;font-size:13px;line-height:20px;color:#50575e;left:570.5px;font-style:italic;letter-spacing:0.107px;">sub item</div>
<div class="tx " id="t100" style="top:750.34px;font-size:12px;line-height:20px;color:#646970;left:833px;letter-spacing:0.027px;">Custom Link</div>
<div class="abs" style="left:916px;top:757px;width:0;height:0;border-left:4px solid transparent;border-right:4px solid transparent;border-top:6px solid #646970"></div>
<div class="item" style="left:523px;top:790px"></div>
<div class="tx " id="t101" style="top:801.00px;font-size:13px;line-height:20px;color:#1d2327;left:539px;font-weight:700;letter-spacing:-0.534px;">Saved Courses</div>
<div class="tx " id="t102" style="top:801.00px;font-size:13px;line-height:20px;color:#50575e;left:634px;font-style:italic;letter-spacing:0.107px;">sub item</div>
<div class="tx " id="t103" style="top:801.34px;font-size:12px;line-height:20px;color:#646970;left:833px;letter-spacing:0.027px;">Custom Link</div>
<div class="abs" style="left:916px;top:808px;width:0;height:0;border-left:4px solid transparent;border-right:4px solid transparent;border-top:6px solid #646970"></div>
<div class="item" style="left:493px;top:841px"></div>
<div class="tx " id="t104" style="top:852.00px;font-size:13px;line-height:20px;color:#1d2327;left:509px;font-weight:700;letter-spacing:-0.723px;">Blog</div>
<div class="tx " id="t105" style="top:852.34px;font-size:12px;line-height:20px;color:#646970;left:803px;letter-spacing:0.027px;">Custom Link</div>
<div class="abs" style="left:886px;top:859px;width:0;height:0;border-left:4px solid transparent;border-right:4px solid transparent;border-top:6px solid #646970"></div>
<div class="item" style="left:523px;top:892px"></div>
<div class="tx " id="t106" style="top:903.00px;font-size:13px;line-height:20px;color:#1d2327;left:539px;font-weight:700;letter-spacing:-0.475px;">Blog No Sidebar</div>
<div class="tx " id="t107" style="top:903.00px;font-size:13px;line-height:20px;color:#50575e;left:641px;font-style:italic;letter-spacing:0.107px;">sub item</div>
<div class="tx " id="t108" style="top:903.34px;font-size:12px;line-height:20px;color:#646970;left:833px;letter-spacing:0.027px;">Custom Link</div>
<div class="abs" style="left:916px;top:910px;width:0;height:0;border-left:4px solid transparent;border-right:4px solid transparent;border-top:6px solid #646970"></div>
<div class="item" style="left:523px;top:943px"></div>
<div class="tx " id="t109" style="top:954.00px;font-size:13px;line-height:20px;color:#1d2327;left:539px;font-weight:700;letter-spacing:-0.390px;">Blog Left Sidebar</div>
<div class="tx " id="t110" style="top:954.00px;font-size:13px;line-height:20px;color:#50575e;left:648px;font-style:italic;letter-spacing:0.107px;">sub item</div>
<div class="tx " id="t111" style="top:954.34px;font-size:12px;line-height:20px;color:#646970;left:833px;letter-spacing:0.027px;">Custom Link</div>
<div class="abs" style="left:916px;top:961px;width:0;height:0;border-left:4px solid transparent;border-right:4px solid transparent;border-top:6px solid #646970"></div>
<div class="item" style="left:523px;top:994px"></div>
<div class="tx " id="t112" style="top:1005.00px;font-size:13px;line-height:20px;color:#1d2327;left:539px;font-weight:700;letter-spacing:-0.444px;">Blog Right Sidebar</div>
<div class="tx " id="t113" style="top:1005.00px;font-size:13px;line-height:20px;color:#50575e;left:656px;font-style:italic;letter-spacing:0.107px;">sub item</div>
<div class="tx " id="t114" style="top:1005.34px;font-size:12px;line-height:20px;color:#646970;left:833px;letter-spacing:0.027px;">Custom Link</div>
<div class="abs" style="left:916px;top:1012px;width:0;height:0;border-left:4px solid transparent;border-right:4px solid transparent;border-top:6px solid #646970"></div>
<div class="abs" style="left:493px;top:1060px;width:109px;height:29.500px;background:#f6f7f7;border:1px solid #dcdcde;border-radius:3px;box-shadow:0 1px 1px rgba(0,0,0,.06)"></div>
<div class="cb" style="left:504px;top:1065px"></div>
<div class="tx " id="t115" style="top:1064.90px;font-size:13px;line-height:20px;color:#3c434a;left:527.5px;letter-spacing:-0.150px;">Bulk Select</div>
<div class="abs" style="left:493px;top:1116px;width:1396px;height:1px;background:#f0f0f1"></div>
<div class="tx " id="t116" style="top:1134.46px;font-size:16px;line-height:20px;color:#1d2327;left:493px;font-weight:700;letter-spacing:0.050px;">Menu Settings</div>
<div class="tx " id="t117" style="top:1163.80px;font-size:13px;line-height:20px;color:#646970;left:493px;letter-spacing:-0.077px;">Auto add pages</div>
<div class="cb" style="left:772px;top:1165px"></div>
<div class="tx " id="t118" style="top:1164.50px;font-size:13px;line-height:20px;color:#3c434a;left:796px;letter-spacing:0.014px;">Automatically add new top-level pages to this menu</div>
<div class="tx " id="t119" style="top:1195.80px;font-size:13px;line-height:20px;color:#646970;left:493px;letter-spacing:0.060px;">Display location</div>
<div class="cb" style="left:772px;top:1198px"><svg width="21" height="21" viewBox="0 0 20 20" style="position:absolute;left:-4px;top:-3px"><path fill="#3582c4" d="M14.83 4.89l1.34.94-5.81 8.38H9.02L5.78 9.67l1.34-1.25 2.57 2.4z"/></svg></div>
<div class="tx " id="t120" style="top:1196.80px;font-size:13px;line-height:20px;color:#3c434a;left:796px;letter-spacing:-0.077px;">Primary Menu</div>
<div class="cb" style="left:772px;top:1220px"></div>
<div class="tx " id="t121" style="top:1218.80px;font-size:13px;line-height:20px;color:#3c434a;left:796px;letter-spacing:-0.064px;">Footer Menu</div>
<div class="abs" style="left:483px;top:1258px;width:1416px;height:53px;background:#f6f7f7;border-top:1px solid #dcdcde"></div>
<div class="abs" style="left:493px;top:1269px;width:90px;height:32px;background:#2271b1;border-radius:3px"></div>
<div class="tx " id="t122" style="top:1274.50px;font-size:13px;line-height:20px;color:#fff;left:506px;letter-spacing:-0.196px;">Save Menu</div>
<div class="tx " id="t123" style="top:1274.50px;font-size:13px;line-height:20px;color:#b32d2e;left:593px;letter-spacing:-0.156px;"><u>Delete Menu</u></div>
<div class="red" style="left:474px;top:276px;width:1440px;height:839px"></div>
<div class="tx " id="t124" style="top:1366.50px;font-size:13px;line-height:20px;color:#50575e;left:181px;font-style:italic;letter-spacing:-0.030px;">Thank you for creating with <u style="color:#2271b1">WordPress</u>.</div>
<div class="tx " id="t125" style="top:1366.50px;font-size:13px;line-height:20px;color:#50575e;right:21px;letter-spacing:-0.069px;">Version 6.9.1</div>
</body>
</html>
